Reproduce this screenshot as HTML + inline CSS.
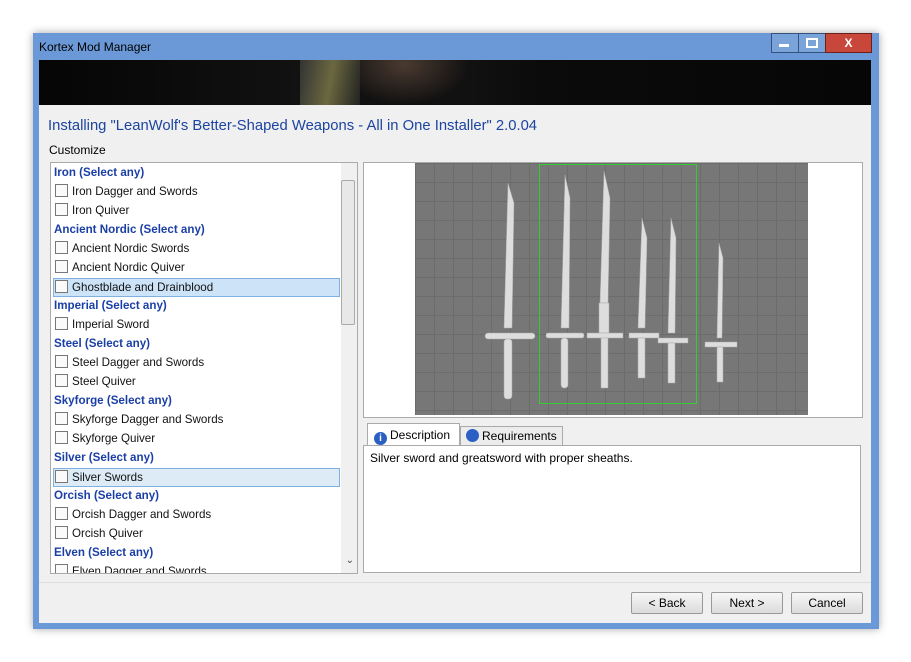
<!DOCTYPE html><html><head><style>
body{margin:0;width:911px;height:662px;background:#fff;position:relative;font-family:"Liberation Sans",sans-serif;font-size:12px;overflow:hidden}
.a{position:absolute}
.win{left:33px;top:33px;width:846px;height:596px;background:#6b98d6;box-shadow:0 0 8px rgba(0,0,0,.35)}
.item{position:absolute;left:3px;height:18px;line-height:18px;width:285px;color:#111;font-size:11.6px}
.item i{display:inline-block;width:11px;height:11px;border:1px solid #777;background:#fafafa;vertical-align:-2px;margin:0 4px 0 1px}
.hd{color:#1a3fa6;font-weight:bold}
.sel{background:#cde3f7;border:1px solid #7fb0e0;height:17px;left:2px}
.btn{position:absolute;top:592px;width:70px;height:20px;border:1px solid #999;background:linear-gradient(#f6f6f6,#dcdcdc);text-align:center;line-height:20px;font-size:12px;border-radius:2px}
</style></head><body>
<div class="a win"></div>
<div class="a" style="left:39px;top:40px;color:#000;font-size:12px">Kortex Mod Manager</div>
<div class="a" style="left:771px;top:33px;width:26px;height:18px;background:#7aa3da;border:1px solid #34527d"></div>
<div class="a" style="left:798px;top:33px;width:26px;height:18px;background:#7aa3da;border:1px solid #34527d"></div>
<div class="a" style="left:825px;top:33px;width:45px;height:18px;background:#c8463a;border:1px solid #6b2018;color:#fff;text-align:center;font-weight:bold;line-height:18px">X</div>
<div class="a" style="left:779px;top:44px;width:10px;height:3px;background:#fff"></div>
<div class="a" style="left:806px;top:38px;width:8px;height:6px;border:2px solid #fff"></div>
<div class="a" style="left:39px;top:60px;width:832px;height:563px;background:#f0f0f0"></div>
<div class="a" style="left:39px;top:60px;width:832px;height:45px;background:linear-gradient(90deg,#050505,#111 30%,#1a1a1a 40%,#0b0b0b 60%,#060606)"></div>
<div class="a" style="left:300px;top:60px;width:60px;height:45px;background:linear-gradient(100deg,#333,#6b6840,#222)"></div>
<div class="a" style="left:360px;top:60px;width:110px;height:45px;background:radial-gradient(ellipse at 40% 10%,#4a3a30,#111 70%)"></div>
<div class="a" style="left:48px;top:118px;color:#1c44a0;font-size:14.8px">Installing "LeanWolf's Better-Shaped Weapons - All in One Installer" 2.0.04</div>
<div class="a" style="left:49px;top:143px;font-size:12px">Customize</div>
<div class="a" style="left:50px;top:162px;width:306px;height:410px;background:#fff;border:1px solid #aaa;overflow:hidden">
<div class="a" style="right:0;top:0;width:16px;height:410px;background:#f0f0f0"></div>
<div class="a" style="right:2px;top:17px;width:12px;height:143px;background:#e8e8e8;border:1px solid #aaa;border-radius:2px"></div>
<div class="a" style="right:3px;top:392px;font-size:10px;color:#444">&#8964;</div>
<div class="item hd" style="top:1px">Iron (Select any)</div>
<div class="item" style="top:20px"><i></i>Iron Dagger and Swords</div>
<div class="item" style="top:39px"><i></i>Iron Quiver</div>
<div class="item hd" style="top:58px">Ancient Nordic (Select any)</div>
<div class="item" style="top:77px"><i></i>Ancient Nordic Swords</div>
<div class="item" style="top:96px"><i></i>Ancient Nordic Quiver</div>
<div class="item sel" style="top:115px"><i></i>Ghostblade and Drainblood</div>
<div class="item hd" style="top:134px">Imperial (Select any)</div>
<div class="item" style="top:153px"><i></i>Imperial Sword</div>
<div class="item hd" style="top:172px">Steel (Select any)</div>
<div class="item" style="top:191px"><i></i>Steel Dagger and Swords</div>
<div class="item" style="top:210px"><i></i>Steel Quiver</div>
<div class="item hd" style="top:229px">Skyforge (Select any)</div>
<div class="item" style="top:248px"><i></i>Skyforge Dagger and Swords</div>
<div class="item" style="top:267px"><i></i>Skyforge Quiver</div>
<div class="item hd" style="top:286px">Silver (Select any)</div>
<div class="item sel" style="top:305px;background:#dcebf6"><i></i>Silver Swords</div>
<div class="item hd" style="top:324px">Orcish (Select any)</div>
<div class="item" style="top:343px"><i></i>Orcish Dagger and Swords</div>
<div class="item" style="top:362px"><i></i>Orcish Quiver</div>
<div class="item hd" style="top:381px">Elven (Select any)</div>
<div class="item" style="top:400px"><i></i>Elven Dagger and Swords</div>
</div>
<div class="a" style="left:363px;top:162px;width:498px;height:254px;background:#fff;border:1px solid #aaa"></div>
<div class="a" style="left:415px;top:163px;width:393px;height:252px;background-color:#777;background-image:linear-gradient(#6c6c6c 1px,transparent 1px),linear-gradient(90deg,#6c6c6c 1px,transparent 1px);background-size:19px 19px"></div>
<div class="a" style="left:539px;top:164px;width:156px;height:238px;border:1px solid #3c3"></div>
<svg class="a" style="left:415px;top:163px" width="393" height="252">
<g fill="#ddd" stroke="#aaa" stroke-width=".5">
<path d="M93 20 L99 40 L97 165 L89 165 Z"/><rect x="70" y="170" width="50" height="6" rx="3"/><rect x="89" y="176" width="8" height="60" rx="3"/>
<path d="M150 12 L155 35 L154 165 L146 165 Z"/><rect x="131" y="170" width="38" height="5" rx="2"/><rect x="146" y="175" width="7" height="50" rx="3"/>
<path d="M189 8 L195 35 L193 140 L185 140 Z"/><rect x="184" y="140" width="10" height="30"/><rect x="172" y="170" width="36" height="5"/><rect x="186" y="175" width="7" height="50"/>
<path d="M227 55 L232 75 L230 165 L223 165 Z"/><rect x="214" y="170" width="30" height="5"/><rect x="223" y="175" width="7" height="40"/>
<path d="M256 55 L261 75 L260 170 L253 170 Z"/><rect x="243" y="175" width="30" height="5"/><rect x="253" y="180" width="7" height="40"/>
<path d="M304 80 L308 95 L307 175 L302 175 Z"/><rect x="290" y="179" width="32" height="5"/><rect x="302" y="184" width="6" height="35"/>
</g></svg>
<div class="a" style="left:367px;top:423px;width:91px;height:22px;background:#fff;border:1px solid #aaa;border-bottom:none;line-height:22px"><span style="display:inline-block;width:13px;height:13px;border-radius:50%;background:#2b5fc4;color:#fff;font-size:10px;text-align:center;line-height:13px;font-weight:bold;margin:0 3px 0 6px;vertical-align:-2px">i</span>Description</div>
<div class="a" style="left:460px;top:426px;width:101px;height:19px;background:#ececec;border:1px solid #aaa;border-bottom:none;line-height:19px"><span style="display:inline-block;width:13px;height:13px;border-radius:50%;background:#2b5fc4;margin:0 3px 0 5px;vertical-align:-2px"></span>Requirements</div>
<div class="a" style="left:363px;top:445px;width:496px;height:126px;background:#fff;border:1px solid #aaa"></div>
<div class="a" style="left:370px;top:451px">Silver sword and greatsword with proper sheaths.</div>
<div class="a" style="left:39px;top:582px;width:832px;height:1px;background:#ddd"></div>
<div class="btn" style="left:631px">&lt; Back</div>
<div class="btn" style="left:711px">Next &gt;</div>
<div class="btn" style="left:791px">Cancel</div>
</body></html>
